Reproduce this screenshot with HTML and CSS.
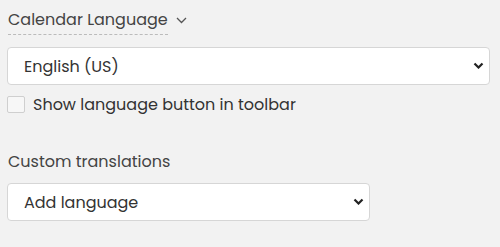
FILE: index.html
```html
<!DOCTYPE html>
<html lang="en">
<head>
  <meta charset="UTF-8" />
  <title>Calendar settings</title>
  <link rel="stylesheet" href="styles.css">
</head>
<body>
  <div class="settings">
    <div class="section-title">
      <span class="dotted">Calendar Language</span>
      <svg class="caret" width="11" height="7" viewBox="0 0 11 7"><path d="M1 1l4.5 4.5 4.5-4.5" fill="none" stroke="#555" stroke-width="1.3"/></svg>
    </div>

    <div class="select-wrap">
      <select class="select">
        <option>English (US)</option>
      </select>
      <svg class="arrow" width="11" height="7" viewBox="0 0 11 7"><path d="M1.5 1.5l4 4 4-4" fill="none" stroke="#222" stroke-width="2.2"/></svg>
    </div>

    <label class="check-row">
      <input type="checkbox" class="check">
      <span>Show language button in toolbar</span>
    </label>

    <div class="label">Custom translations</div>
    <div class="select-wrap narrow">
      <select class="select">
        <option>Add language</option>
      </select>
      <svg class="arrow" width="11" height="7" viewBox="0 0 11 7"><path d="M1.5 1.5l4 4 4-4" fill="none" stroke="#222" stroke-width="2.2"/></svg>
    </div>
  </div>
</body>
</html>
```

FILE: styles.css
```css
body {
  margin: 0;
  background: #f2f2f2;
  font-family: "Poppins", "Open Sans", sans-serif;
  color: #333;
}

.settings {
  padding: 8px 10px 0 7px;
  display: flex;
  flex-direction: column;
}

.section-title {
  display: flex;
  align-items: center;
  gap: 8px;
  margin-left: 1px;
  font-size: 16px;
  line-height: 24px;
  color: #444;
  margin-bottom: 12px;
}

.dotted {
  border-bottom: 1px dashed #bbb;
  padding-bottom: 2px;
}

.caret {
  margin-top: -3px;
}

.select-wrap {
  position: relative;
}
.select-wrap.narrow {
  width: 363px;
}

.select {
  appearance: none;
  -webkit-appearance: none;
  width: 100%;
  height: 38px;
  box-sizing: border-box;
  border: 1px solid #d6d6d6;
  border-radius: 4px;
  background: #fff;
  font-family: inherit;
  font-size: 16px;
  color: #333;
  padding: 0 16px;
  outline: none;
}

.arrow {
  position: absolute;
  right: 6px;
  top: 15px;
  pointer-events: none;
}

.check-row {
  display: flex;
  align-items: center;
  gap: 8px;
  margin: 11px 0 0 0;
  font-size: 16px;
  line-height: 17px;
  color: #333;
}

.check {
  appearance: none;
  -webkit-appearance: none;
  margin: 0;
  width: 18px;
  height: 17px;
  border: 1px solid #cfcfcf;
  border-radius: 2px;
  background: #f7f7f7;
}

.label {
  margin: 37px 0 9px 1px;
  font-size: 16px;
  line-height: 24px;
  color: #444;
}
```
